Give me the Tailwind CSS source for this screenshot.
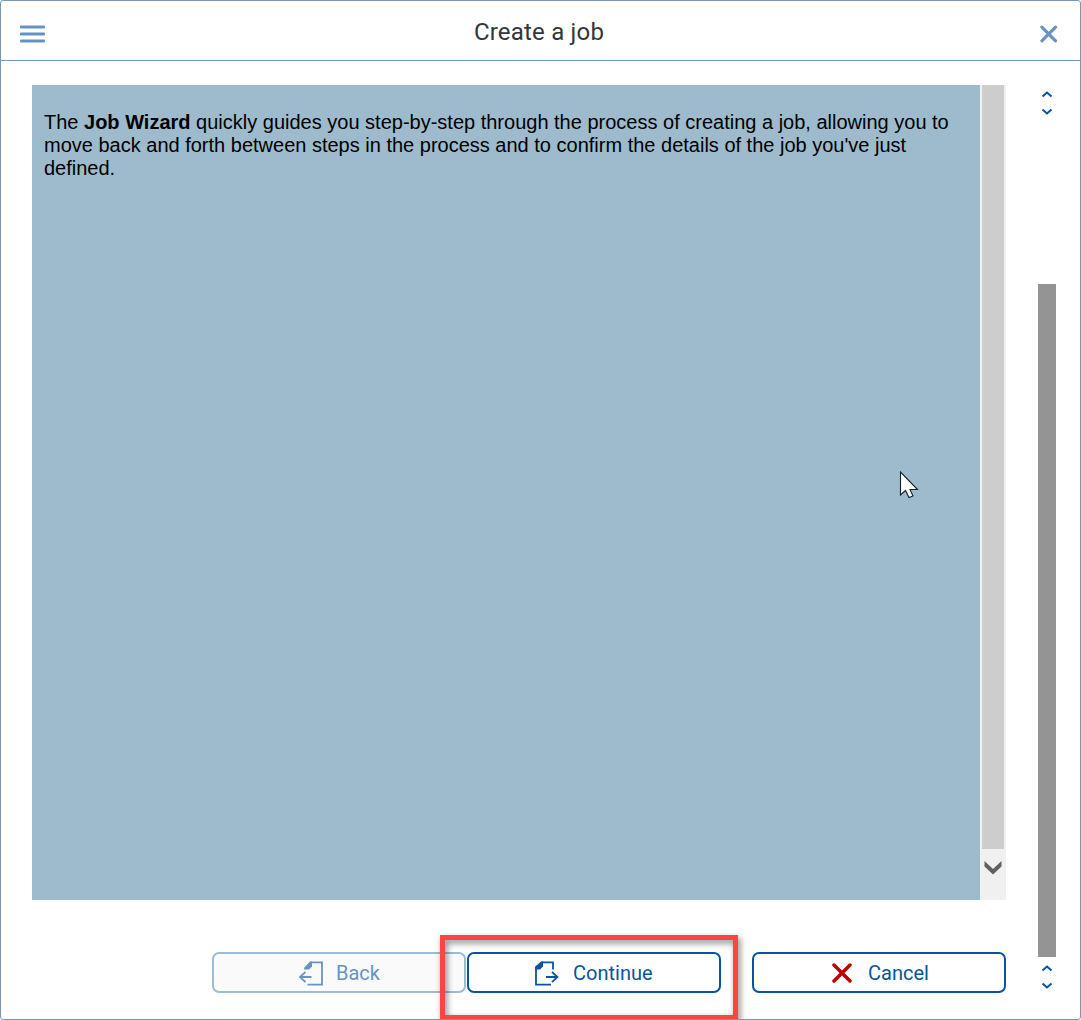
<!DOCTYPE html>
<html lang="en">
<head>
<meta charset="utf-8">
<title>Create a job</title>
<script src="https://cdn.jsdelivr.net/npm/@tailwindcss/browser@4"></script>
</head>
<body class="bg-white">
<div class="relative flex h-[1020px] w-[1081px] flex-col overflow-hidden rounded-[3px] border border-[#7698bb] bg-white">
  <header class="flex h-[60px] shrink-0 items-center justify-between border-b border-[#7698bb] pr-[22px] pl-[19px] font-['Roboto',sans-serif]">
    <svg class="mt-[6px] h-[18px] w-[25px]" viewBox="0 0 25 18" fill="#6793c4"><rect y="0.500" width="25" height="3" rx="1"/><rect y="7.500" width="25" height="3" rx="1"/><rect y="14.500" width="25" height="3" rx="1"/></svg>
    <h1 class="mt-[2px] mr-[7px] text-[24px] leading-[30px] tracking-[0.200px] text-[#32363a]">Create a job</h1>
    <svg class="mt-[6px] h-[18px] w-[18px]" viewBox="0 0 18 18" fill="none" stroke="#6793c4" stroke-width="3.200" stroke-linecap="round"><path d="M1.900 2.200 15.500 15.800M15.500 2.200 1.900 15.800"/></svg>
  </header>
  <div class="flex flex-1">
    <main class="ml-[31px] flex w-[974px] shrink-0 flex-col pt-6">
      <section class="flex h-[815px]">
        <div class="w-[948px] bg-[#9dbbcc] pt-[26px] pl-3 font-['Liberation_Sans',Arial,sans-serif] text-[20px] leading-[23px] text-black">
          <p class="whitespace-nowrap">The <b>Job Wizard</b> quickly guides you step-by-step through the process of creating a job, allowing you to<br>move back and forth between steps in the process and to confirm the details of the job you've just<br>defined.</p>
        </div>
        <div class="flex w-[26px] flex-col items-center bg-[#f0f0f0]">
          <div class="h-[764px] w-[22px] bg-[#cdcdcd]"></div>
          <svg class="mt-[11px] h-[16px] w-[18px]" viewBox="0 0 18 16" fill="#606060"><path d="M.5 1 9 9 17.500 1V6.500L9 14.500.5 6.500Z"/></svg>
        </div>
      </section>
      <footer class="mt-[52px] flex pl-[180px] font-['Roboto',sans-serif] text-[20px] leading-[24px] text-[#0854a0]">
        <button class="flex h-[41px] w-[254px] items-center rounded-[7px] border-2 border-[#9cbbd9] bg-[#fafafa] pl-[84px] text-[#6793c4]">
          <svg class="h-[26px] w-[26px]" viewBox="0 0 26 26" fill="none" stroke="currentColor" stroke-width="1.800"><path d="M9.500 24.700H24V2.300H13L7 8.500M13.500 17H2M7.500 11.800 2 17 7.500 22.200"/><path fill="currentColor" stroke="none" d="M14 1.500V6.500L11 9.500H5.500L7 7 12 1.500Z"/></svg>
          <span class="ml-[12px]">Back</span>
        </button>
        <button class="ml-px flex h-[41px] w-[254px] items-center rounded-[7px] border-2 border-[#0854a0] bg-white pl-[66px]">
          <svg class="h-[26px] w-[24px]" viewBox="0 0 24 26" fill="none" stroke="currentColor" stroke-width="1.800"><path d="M16 24.700H1V7.500L7 2.300H18V9.500M11 17H22.500M17 11.800 22.500 17 17 22.200"/><path fill="currentColor" stroke="none" d="M8 1.500V6.500L5 9.500H0V7L6 1.500Z"/></svg>
          <span class="ml-[14px]">Continue</span>
        </button>
        <button class="ml-[31px] flex h-[41px] w-[254px] items-center rounded-[7px] border-2 border-[#0854a0] bg-white pl-[78px]">
          <svg class="h-[20px] w-[20px]" viewBox="0 0 20 20" fill="none" stroke="#bb0000" stroke-width="3.500" stroke-linecap="round"><path d="M2 2 18 18M18 2 2 18"/></svg>
          <span class="ml-[16px]">Cancel</span>
        </button>
      </footer>
    </main>
    <aside class="ml-[32px] flex w-[18px] flex-col items-center pt-[29px]">
      <svg class="h-[26px] w-[12px] shrink-0" viewBox="0 0 12 26" fill="none" stroke="#0854a0" stroke-width="2"><path d="M1.500 6.500 6 2.500 10.500 6.500M1.500 19.500 6 23.500 10.500 19.500"/></svg>
      <div class="mt-[168px] h-[673px] w-full shrink-0 bg-[#949494]"></div>
      <svg class="mt-[7px] h-[26px] w-[12px] shrink-0" viewBox="0 0 12 26" fill="none" stroke="#0854a0" stroke-width="2"><path d="M1.500 6.500 6 2.500 10.500 6.500M1.500 19.500 6 23.500 10.500 19.500"/></svg>
    </aside>
  </div>
  <svg class="absolute top-[470px] left-[898px] h-[28px] w-[20px]" viewBox="0 0 20 28" fill="white" stroke="#17212b" stroke-width="1.100"><path d="M1.500 1V24L6.500 19.500 10 26.500 14 25 11 18.500H18.500Z"/></svg>
  <div class="absolute top-[934px] left-[439px] h-[85px] w-[298px] border-5 border-[#fd4444] drop-shadow-[2px_3px_3px_rgba(0,0,0,0.5)]"></div>
</div>
</body>
</html>
